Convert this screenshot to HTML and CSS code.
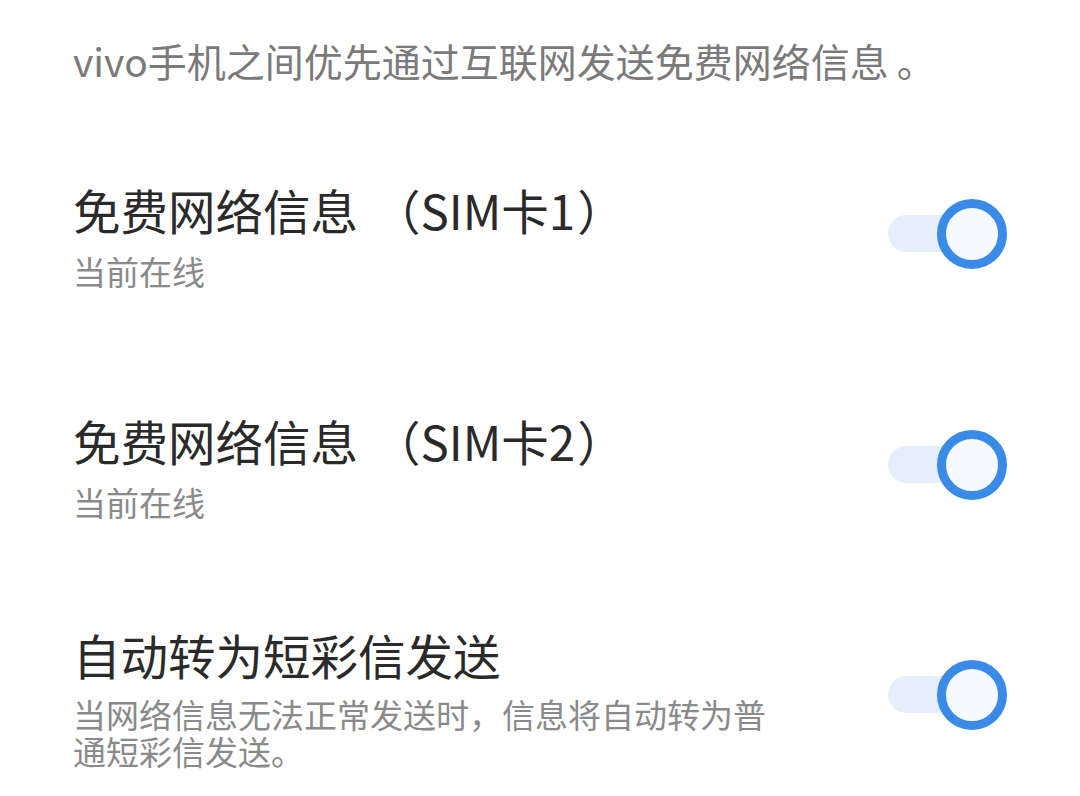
FILE: index.html
```html
<!DOCTYPE html>
<html lang="zh-CN">
<head>
<meta charset="utf-8">
<link rel="stylesheet" href="styles.css">
</head>
<body>
<div class="page">
  <p class="intro">vivo手机之间优先通过互联网发送免费网络信息<span class="period">。</span></p>

  <div class="row row-1">
    <div class="text">
      <div class="title">免费网络信息<span class="pl">（</span>SIM卡1<span class="pr">）</span></div>
      <div class="sub">当前在线</div>
    </div>
    <div class="toggle"><span class="track"></span><span class="knob"></span></div>
  </div>

  <div class="row row-2">
    <div class="text">
      <div class="title">免费网络信息<span class="pl">（</span>SIM卡2<span class="pr">）</span></div>
      <div class="sub">当前在线</div>
    </div>
    <div class="toggle"><span class="track"></span><span class="knob"></span></div>
  </div>

  <div class="row row-3">
    <div class="text">
      <div class="title">自动转为短彩信发送</div>
      <div class="sub desc">当网络信息无法正常发送时，信息将自动转为普通短彩信发送。</div>
    </div>
    <div class="toggle"><span class="track"></span><span class="knob"></span></div>
  </div>
</div>
</body>
</html>
```

FILE: styles.css
```css
html, body {
  margin: 0;
  padding: 0;
  background: #ffffff;
}

body {
  font-family: "Noto Sans CJK SC", "Noto Sans", sans-serif;
  width: 1080px;
  height: 796px;
  overflow: hidden;
}

.page {
  padding: 35px 73px 0 73px;
}

.intro {
  margin: 0;
  font-size: 39px;
  line-height: 50px;
  color: #7a7a7a;
  white-space: nowrap;
}

.period {
  margin-left: 8px;
}

.row {
  display: flex;
  justify-content: space-between;
  align-items: center;
}

.row-1 {
  margin-top: 95px;
}

.row-2 {
  margin-top: 118px;
}

.row-3 {
  margin-top: 101px;
}

.text {
  width: 705px;
}

.title {
  font-size: 47.5px;
  line-height: 60px;
  color: #2a2a2a;
  white-space: nowrap;
}

.pl {
  margin-left: 15px;
}

.pr {
  margin-left: 2px;
}

.sub {
  margin-top: 9px;
  font-size: 33px;
  line-height: 44px;
  color: #8a8a8a;
}

.desc {
  margin-top: 11px;
  line-height: 37px;
}

.toggle {
  display: flex;
  align-items: center;
  flex: none;
  margin-bottom: 6px;
}

.track {
  display: block;
  width: 74px;
  height: 37px;
  border-radius: 19px;
  background: #e5effb;
}

.knob {
  display: block;
  box-sizing: border-box;
  width: 70px;
  height: 70px;
  margin-left: -25px;
  border-radius: 50%;
  border: 9px solid #3a8be8;
  background: #f6faff;
}
```
